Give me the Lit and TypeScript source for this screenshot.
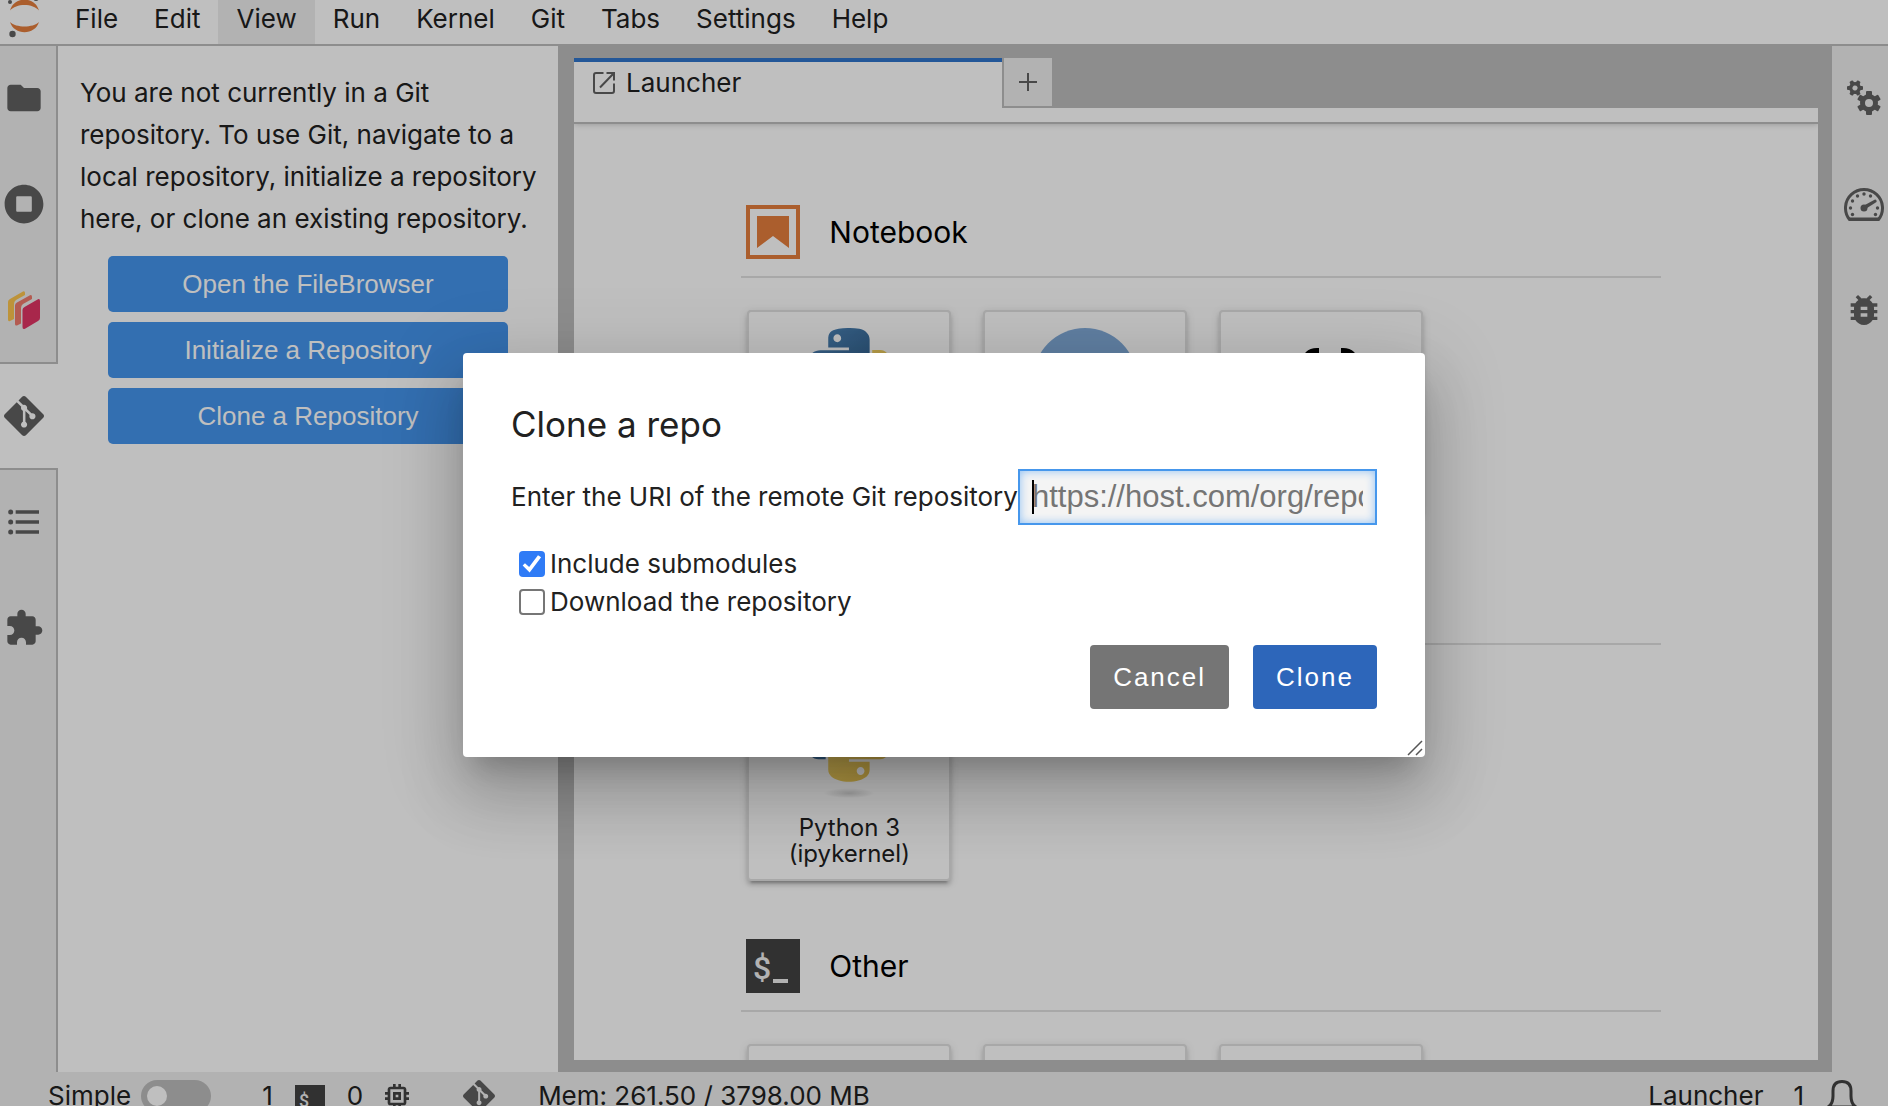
import { LitElement, html, svg, css, nothing } from "lit";
import type { SVGTemplateResult } from "lit";
import { customElement } from "lit/decorators.js";
import { classMap } from "lit/directives/class-map.js";

const GIT =
  "M23.546 10.93L13.067.452c-.604-.603-1.582-.603-2.188 0L8.708 2.627l2.76 2.76c.645-.215 1.379-.07 1.889.441.516.515.658 1.258.438 1.9l2.658 2.66c.645-.223 1.387-.078 1.9.435.721.72.721 1.884 0 2.604-.719.719-1.881.719-2.6 0-.539-.541-.674-1.337-.404-1.996L12.86 8.955v6.525c.176.086.342.203.488.348.713.721.713 1.883 0 2.6-.719.721-1.889.721-2.609 0-.719-.719-.719-1.879 0-2.598.182-.18.387-.316.605-.406V8.835c-.217-.091-.424-.222-.6-.401-.545-.545-.676-1.342-.396-2.009L7.636 3.7.45 10.881c-.6.605-.6 1.584 0 2.189l10.48 10.477c.604.604 1.582.604 2.186 0l10.43-10.43c.605-.603.605-1.582 0-2.187";

const gear = (cx: number, cy: number, body: number, tip: number, hole: number, tooth: number, turn: number) => svg`
  <g transform="translate(${cx} ${cy}) rotate(${turn})">
    <circle r=${(body + hole) / 2} fill="none" stroke="currentColor" stroke-width=${body - hole}></circle>
    ${[0, 60, 120, 180, 240, 300].map(
      (a) => svg`<rect x=${-tooth / 2} y=${-tip} width=${tooth} height=${tip - body + 2} rx="1" transform="rotate(${a})" fill="currentColor"></rect>`
    )}
  </g>`;

const icon = (box: string, body: SVGTemplateResult) =>
  html`<svg class="icon" viewBox=${box} fill="currentColor" aria-hidden="true">${body}</svg>`;

const gitIcon = () => icon("0 0 24 24", svg`<path d=${GIT}></path>`);

const LEFT_TABS = [
  {
    name: "File Browser",
    art: icon("0 0 24 24", svg`<path d="M10 4H4c-1.1 0-2 .9-2 2v12c0 1.1.9 2 2 2h16c1.1 0 2-.9 2-2V8c0-1.1-.9-2-2-2h-8l-2-2z"></path>`),
  },
  {
    name: "Running",
    art: icon(
      "0 0 512 512",
      svg`<path d="M256 8C119 8 8 119 8 256s111 248 248 248 248-111 248-248S393 8 256 8zm100 332c0 8.800-7.200 16-16 16H172c-8.800 0-16-7.200-16-16V172c0-8.800 7.200-16 16-16h168c8.800 0 16 7.200 16 16v168z"></path>`
    ),
  },
  {
    name: "Dask",
    art: icon(
      "0 0 40 40",
      svg`<path fill="#fcc54e" d="M4 12Q4 10 6 9L19 1.500Q21 .6 21 3V5L12 10Q10 11.500 10 14V29L6 31Q4 32 4 29.500Z"></path>
        <path fill="#ef7a6c" d="M11 15.500Q11 13.500 13 12.400L26 5.200Q28 4.400 28 7V9L19 14Q17 15.300 17 18V33.500L13 35.500Q11 36 11 34Z"></path>
        <path fill="#e03465" d="M18.500 20Q18.500 18 20.500 17L34 9.300Q36 8.500 36 11V28Q36 30 34 31L21 38.700Q18.500 40 18.500 37Z"></path>`
    ),
  },
  { name: "Git", art: gitIcon(), active: true },
  {
    name: "Table of Contents",
    art: icon(
      "0 0 24 24",
      svg`<path d="M7 5h14v2H7zM7 11h14v2H7zM7 17h14v2H7z"></path>
        <circle cx="4" cy="6" r="1.500"></circle><circle cx="4" cy="12" r="1.500"></circle><circle cx="4" cy="18" r="1.500"></circle>`
    ),
  },
  {
    name: "Extension Manager",
    art: icon(
      "0 0 24 24",
      svg`<path d="M20.500 11H19V7c0-1.100-.9-2-2-2h-4V3.500C13 2.120 11.880 1 10.500 1S8 2.120 8 3.500V5H4c-1.100 0-1.990.9-1.990 2v3.800H3.500c1.490 0 2.700 1.210 2.700 2.700s-1.210 2.700-2.700 2.700H2V20c0 1.100.9 2 2 2h3.800v-1.500c0-1.490 1.210-2.700 2.700-2.700 1.490 0 2.700 1.210 2.700 2.700V22H17c1.100 0 2-.9 2-2v-4h1.500c1.380 0 2.500-1.120 2.500-2.500S21.880 11 20.500 11z"></path>`
    ),
  },
];

const RIGHT_TABS = [
  { name: "Property Inspector", art: icon("0 0 40 40", svg`${gear(11, 10, 6, 8, 2.5, 4, 30)}${gear(25, 25, 9, 12, 4, 6, 0)}`) },
  {
    name: "Resource Usage",
    art: icon(
      "0 0 40 40",
      svg`<path d="M5.500 35.500A18.500 18.500 0 1 1 34.500 35.500Z" fill="none" stroke="currentColor" stroke-width="3" stroke-linejoin="round"></path>
        <path d="M5 33.500H35V37H5Z"></path>
        <circle cx="20" cy="24" r="3.500"></circle>
        <path d="M19 22L31 15.500Q33 15.500 32.500 18L21.500 25Z"></path>
        ${[[8.5, 30.5], [6.5, 24], [8.5, 17], [13.5, 12], [20, 10], [26.5, 12], [33.5, 24], [31.5, 30.5]].map(
          ([x, y]) => svg`<circle cx=${x} cy=${y} r="1.700"></circle>`
        )}`
    ),
  },
  {
    name: "Debugger",
    art: icon(
      "0 0 24 24",
      svg`<path d="M20 8h-2.810c-.45-.78-1.070-1.450-1.820-1.960L17 4.410 15.590 3l-2.170 2.170C12.960 5.060 12.490 5 12 5c-.49 0-.96.06-1.410.17L8.410 3 7 4.410l1.620 1.630C7.880 6.550 7.260 7.220 6.810 8H4v2h2.090c-.05.33-.09.66-.09 1v1H4v2h2v1c0 .34.04.67.09 1H4v2h2.810c1.040 1.790 2.970 3 5.190 3s4.150-1.210 5.190-3H20v-2h-2.090c.05-.33.09-.66.09-1v-1h2v-2h-2v-1c0-.34-.04-.67-.09-1H20V8zm-6 8h-4v-2h4v2zm0-4h-4v-2h4v2z"></path>`
    ),
  },
];

const pythonArt = () => html`<svg class="card-art" viewBox="2 2 124 124" aria-hidden="true">
  <defs>
    <linearGradient id="py-blue" x1="0" y1="0" x2="1" y2="1"><stop offset="0" stop-color="#5089bd"></stop><stop offset="1" stop-color="#2e5c88"></stop></linearGradient>
    <linearGradient id="py-gold" x1="0" y1="0" x2="1" y2="1"><stop offset="0" stop-color="#fbdd70"></stop><stop offset="1" stop-color="#e6bf4a"></stop></linearGradient>
    <radialGradient id="py-shade"><stop offset="0" stop-color="#000" stop-opacity=".16"></stop><stop offset="1" stop-color="#000" stop-opacity="0"></stop></radialGradient>
  </defs>
  <ellipse cx="64" cy="119" rx="30" ry="6" fill="url(#py-shade)"></ellipse>
  <path fill="url(#py-blue)" d="M63.391 1.988c-4.222.02-8.252.379-11.800 1.007-10.450 1.846-12.346 5.710-12.346 12.837v9.411h24.693v3.137H29.977c-7.176 0-13.460 4.313-15.426 12.521-2.268 9.405-2.368 15.275 0 25.096 1.755 7.311 5.947 12.519 13.124 12.519h8.491V67.234c0-8.151 7.051-15.340 15.426-15.340h24.665c6.866 0 12.346-5.654 12.346-12.548V15.833c0-6.693-5.646-11.720-12.346-12.837-4.244-.706-8.645-1.027-12.866-1.008zM50.037 9.557c2.550 0 4.634 2.117 4.634 4.721 0 2.593-2.083 4.690-4.634 4.690-2.560 0-4.633-2.097-4.633-4.690-.001-2.604 2.073-4.721 4.633-4.721z"></path>
  <path fill="url(#py-gold)" d="M91.682 28.380v10.966c0 8.500-7.208 15.655-15.426 15.655H51.591c-6.756 0-12.346 5.783-12.346 12.549v23.515c0 6.691 5.818 10.628 12.346 12.547 7.816 2.297 15.312 2.713 24.665 0 6.216-1.801 12.346-5.423 12.346-12.547v-9.412H63.938v-3.138h37.012c7.176 0 9.852-5.005 12.348-12.519 2.578-7.735 2.467-15.174 0-25.096-1.774-7.145-5.161-12.521-12.348-12.521h-9.268zM77.809 87.927c2.561 0 4.634 2.097 4.634 4.692 0 2.602-2.074 4.719-4.634 4.719-2.550 0-4.633-2.117-4.633-4.719 0-2.595 2.083-4.692 4.633-4.692z"></path>
</svg>`;

const discArt = () => html`<svg class="card-art" viewBox="0 0 104 104" aria-hidden="true"><circle cx="52" cy="52" r="52" fill="#80aad9"></circle></svg>`;

const bracesArt = () => html`<svg class="card-art" viewBox="0 0 104 104" aria-hidden="true">
  <g fill="none" stroke="#000" stroke-width="10" stroke-linejoin="round">
    <path d="M50 25H48Q38 25 38 35V44Q38 52 30 52Q38 52 38 60V69Q38 79 48 79H50"></path>
    <path d="M72 25H74Q84 25 84 35V44Q84 52 92 52Q84 52 84 60V69Q84 79 74 79H72"></path>
  </g>
</svg>`;

const notebookMark = () => html`<svg class="section-mark" viewBox="0 0 54 54" aria-hidden="true">
  <rect x="2" y="2" width="50" height="50" fill="none" stroke="#e57e3d" stroke-width="4"></rect>
  <path d="M11 11H43V43L27 31L11 43Z" fill="#e57e3d"></path>
</svg>`;

const terminalMark = (cls: string) => html`<svg class=${cls} viewBox="0 0 54 54" aria-hidden="true">
  <rect width="54" height="54" fill="#424242"></rect>
  <text class="prompt" x="7" y="40">$</text>
  <rect x="27" y="40" width="15" height="4" fill="#eee"></rect>
</svg>`;

@customElement("app-root")
export class AppRoot extends LitElement {
  static styles = css`
    :host {
      display: block;
      height: 100vh;
      overflow: hidden;
      position: relative;
      font: 26px/42px Inter, "Liberation Sans", sans-serif;
      color: #212121;
    }
    * { box-sizing: border-box; }
    button { font: inherit; color: inherit; border: 0; padding: 0; margin: 0; background: none; }
    h1, h2, p { margin: 0; padding: 0; font-weight: 400; }

    /* The status bar runs past the lower edge of the window. */
    .shell {
      display: grid;
      grid-template-rows: auto 1fr 48px;
      height: calc(100vh + 14px);
      background: #fff;
    }

    .menubar { display: flex; border-bottom: 2px solid #bdbdbd; background: #fff; }
    .logo { width: 57px; height: 44px; flex: none; }
    .menus { display: flex; }
    .menu { display: flex; align-items: flex-start; height: 44px; padding: 0 18px; line-height: 38px; }
    .menu.active { background: #eee; }

    .work { display: grid; grid-template-columns: 58px 500px 1fr 56px; min-height: 0; }

    .rail { display: flex; flex-direction: column; background: #eee; color: #616161; min-height: 0; }
    .rail::after { content: ""; flex: 1; }
    .rail-left::after { border-right: 2px solid #bdbdbd; }
    .rail-tab { display: flex; align-items: center; height: 106px; padding-bottom: 2px; }
    .rail-left .rail-tab { padding-left: 4px; border-right: 2px solid #bdbdbd; }
    .rail-left .rail-tab.active { padding-bottom: 0; background: #fff; border-right: 0; border-bottom: 2px solid #bdbdbd; }
    .rail-left .rail-tab.before { padding-bottom: 0; border-bottom: 2px solid #bdbdbd; }
    .rail-right .rail-tab { padding-left: 12px; }
    .icon { width: 40px; height: 40px; display: block; }

    .panel { padding-top: 26px; background: #fff; }
    .panel-text { padding: 0 12px 0 22px; }
    .panel-actions { display: flex; flex-direction: column; gap: 10px; padding: 16px 50px; }
    .action {
      height: 56px;
      border-radius: 5px;
      background: #4494ec;
      color: #fff;
      font: 26px "Liberation Sans", sans-serif;
    }

    .dock { display: flex; flex-direction: column; padding: 12px 14px 12px 16px; background: #bdbdbd; min-width: 0; min-height: 0; }
    .tabs { display: flex; height: 50px; }
    .tab {
      display: flex;
      align-items: center;
      gap: 10px;
      width: 428px;
      padding-left: 18px;
      background: #fff;
      box-shadow: inset 0 4px #2f74cb;
    }
    .tab-icon { width: 24px; height: 24px; color: #616161; }
    .add { width: 50px; border-left: 2px solid #bdbdbd; border-bottom: 2px solid #bdbdbd; background: #eee; color: #616161; display: grid; place-items: center; }
    .add-icon { width: 20px; height: 20px; display: block; }
    .toolbar {
      position: relative;
      flex: none;
      height: 16px;
      border-bottom: 2px solid #bdbdbd;
      background: #fff;
      box-shadow: 0 0 6px rgba(0, 0, 0, 0.24);
      clip-path: inset(0 0 -8px 0);
    }

    .launcher { flex: 1; min-height: 0; overflow: hidden; background: #fff; padding: 81px 0 0 10px; }
    .section { width: 74.5%; margin: 0 auto; padding-bottom: 58px; }
    .section-head { display: flex; align-items: center; gap: 29px; height: 73px; padding: 0 5px 17px; border-bottom: 2px solid #e0e0e0; }
    .section-mark { width: 54px; height: 54px; display: block; }
    .prompt { font: 500 32px Roboto, sans-serif; fill: #eee; }
    .section-title { font-size: 30px; line-height: 36px; color: #000; }
    .cards { display: flex; gap: 32px; padding: 32px 6px 0; }
    .card {
      display: flex;
      flex-direction: column;
      align-items: center;
      gap: 16px;
      width: 204px;
      height: 204px;
      padding: 16px 24px 0;
      border: 2px solid #e0e0e0;
      border-radius: 4px;
      background: #fff;
      box-shadow: 0 6px 2px -4px rgba(0, 0, 0, 0.2), 0 4px 4px rgba(0, 0, 0, 0.14), 0 2px 10px rgba(0, 0, 0, 0.12);
    }
    .card-art { width: 104px; height: 104px; flex: none; display: block; }
    .card-label { font-size: 24px; line-height: 26px; text-align: center; }

    .status { display: flex; justify-content: space-between; padding: 0 28px 0 48px; background: #eee; line-height: 48px; }
    .status-group { display: flex; align-items: center; }
    .status-item { display: flex; align-items: center; }
    .simple { gap: 10px; margin-right: 51px; }
    .switch { appearance: none; margin: 0; width: 70px; height: 32px; border-radius: 16px; background: #bdbdbd; padding: 6px; display: flex; }
    .switch::before { content: ""; width: 20px; height: 20px; border-radius: 50%; background: #fff; }
    .counts { gap: 22px; margin-right: 18px; }
    .chip { width: 32px; height: 32px; color: #424242; margin-right: 50px; }
    .status-term { width: 30px; height: 30px; display: block; margin-top: 8px; }
    .status-git { display: flex; color: #616161; margin-right: 43px; }
    .status-git .icon { width: 32px; height: 32px; }
    .status-right { gap: 30px; }
    .bell { width: 36px; height: 36px; color: #424242; margin-left: -10px; }

    .overlay {
      position: absolute;
      inset: 0;
      display: flex;
      align-items: center;
      justify-content: center;
      padding-top: 4px;
      background: rgba(0, 0, 0, 0.25);
    }
    .dialog {
      position: relative;
      width: 962px;
      max-width: 92vw;
      padding: 50px 48px 48px;
      border-radius: 4px;
      background: #fff;
      box-shadow: 0 20px 26px -12px rgba(0, 0, 0, 0.2), 0 40px 62px 6px rgba(0, 0, 0, 0.14), 0 16px 76px 14px rgba(0, 0, 0, 0.12);
    }
    .dialog-title { font-size: 35px; line-height: 42px; }
    .field { display: flex; align-items: center; margin: 24px 0 20px; }
    .field-label { flex: none; }
    .uri-wrap { position: relative; flex: 1; min-width: 0; display: flex; }
    .uri {
      width: 100%;
      height: 56px;
      padding: 0 12px;
      border: 2px solid #4697ec;
      border-radius: 0;
      outline: 0;
      background: #f4f4f4;
      box-shadow: inset 0 0 10px #8fc0f4;
      font: 31px "Liberation Sans", sans-serif;
      color: #212121;
      caret-color: transparent;
    }
    .uri::placeholder { color: #757575; opacity: 1; }
    .caret { position: absolute; left: 14px; top: 11px; width: 2px; height: 34px; background: #000; }
    .check { display: flex; align-items: center; gap: 5px; width: fit-content; padding-left: 8px; line-height: 38px; }
    .box { appearance: none; width: 26px; height: 26px; margin: 0; border: 2px solid #767676; border-radius: 4px; background: #fff; display: grid; }
    .box:checked { border: 0; background: #2f7bf6; }
    .box:checked::before { content: ""; background: #fff; clip-path: polygon(14% 56%, 23% 47%, 39% 62%, 73% 16%, 85% 24%, 41% 83%); }
    .dialog-actions { display: flex; justify-content: flex-end; gap: 24px; margin-top: 24px; }
    .btn { height: 64px; padding: 0 23px; border-radius: 4px; color: #fff; font: 26px "Liberation Sans", sans-serif; letter-spacing: 2px; }
    .cancel { background: #757575; }
    .accept { background: #2d66ba; }
    .grip { position: absolute; right: 2px; bottom: 1px; width: 16px; height: 16px; }
  `;

  firstUpdated() {
    this.renderRoot.querySelector<HTMLInputElement>(".uri")?.focus();
  }

  private menubar() {
    const names = ["File", "Edit", "View", "Run", "Kernel", "Git", "Tabs", "Settings", "Help"];
    return html`<header class="menubar">
      <svg class="logo" viewBox="0 0 57 44" aria-hidden="true">
        <g fill="#e57e3d">
          <path d="M10 10.500C16 3 33 3 39 10.500C35-4 14-4 10 10.500Z"></path>
          <path d="M10 22C16 28 33 28 39 22C35 35.500 14 35.500 10 22Z"></path>
        </g>
        <g fill="#616161"><circle cx="12.500" cy="34" r="3.200"></circle><circle cx="10" cy="2" r="2"></circle><circle cx="36" cy="-1.500" r="2.600"></circle></g>
      </svg>
      <nav class="menus">
        ${names.map((n) => html`<button class=${classMap({ menu: true, active: n === "View" })}>${n}</button>`)}
      </nav>
    </header>`;
  }

  private section(title: string, mark: unknown, cards: { art?: unknown; name: string; label?: string }[]) {
    return html`<section class="section">
      <div class="section-head">${mark}${title ? html`<h2 class="section-title">${title}</h2>` : nothing}</div>
      <div class="cards">
        ${cards.map(
          (c) => html`<button class="card" aria-label=${c.name}>
            ${c.art ?? nothing}${c.label ? html`<span class="card-label">${c.label}</span>` : nothing}
          </button>`
        )}
      </div>
    </section>`;
  }

  private dock() {
    return html`<main class="dock">
      <div class="tabs">
        <div class="tab">
          <svg class="tab-icon" viewBox="0 0 24 24" fill="none" stroke="currentColor" stroke-width="2" aria-hidden="true">
            <path d="M11.500 2H4Q2 2 2 4V20Q2 22 4 22H20Q22 22 22 20V12.500"></path>
            <path d="M14.500 2H22V9.500M22 2L8 16.500"></path>
          </svg>
          <span>Launcher</span>
        </div>
        <button class="add" aria-label="New Launcher">
          <svg class="add-icon" viewBox="0 0 20 20" stroke="currentColor" stroke-width="2" aria-hidden="true"><path d="M10 1V19M1 10H19"></path></svg>
        </button>
      </div>
      <div class="toolbar"></div>
      <div class="launcher">
        ${this.section("Notebook", notebookMark(), [
          { name: "Python 3 notebook", art: pythonArt() },
          { name: "Notebook", art: discArt() },
          { name: "Code notebook", art: bracesArt() },
        ])}
        ${this.section("", nothing, [{ name: "Python 3 (ipykernel)", art: pythonArt(), label: "Python 3 (ipykernel)" }])}
        ${this.section("Other", terminalMark("section-mark"), [{ name: "Terminal" }, { name: "Text File" }, { name: "Markdown File" }])}
      </div>
    </main>`;
  }

  private status() {
    return html`<footer class="status">
      <div class="status-group">
        <label class="status-item simple">Simple <input class="switch" type="checkbox" role="switch" /></label>
        <div class="status-item counts"><span>1</span>${terminalMark("status-term")}<span>0</span></div>
        <svg class="chip" viewBox="0 0 24 24" fill="currentColor" aria-hidden="true">
          <path d="M15 9H9v6h6V9zm-2 4h-2v-2h2v2zm8-2V9h-2V7c0-1.100-.9-2-2-2h-2V3h-2v2h-2V3H9v2H7c-1.100 0-2 .9-2 2v2H3v2h2v2H3v2h2v2c0 1.100.9 2 2 2h2v2h2v-2h2v2h2v-2h2c1.100 0 2-.9 2-2v-2h2v-2h-2v-2h2zm-4 6H7V7h10v10z"></path>
        </svg>
        <span class="status-git">${gitIcon()}</span>
        <span>Mem: 261.50 / 3798.00 MB</span>
      </div>
      <div class="status-group status-right">
        <span>Launcher</span>
        <span>1</span>
        <svg class="bell" viewBox="0 0 36 36" fill="none" stroke="currentColor" stroke-width="3" aria-hidden="true">
          <path d="M4 29Q9 26 9 18V13Q9 3.500 18 3.500Q27 3.500 27 13V18Q27 26 32 29Z"></path>
        </svg>
      </div>
    </footer>`;
  }

  private dialog() {
    return html`<div class="overlay">
      <form class="dialog" role="dialog" aria-labelledby="dialog-title" @submit=${(e: Event) => e.preventDefault()}>
        <h1 class="dialog-title" id="dialog-title">Clone a repo</h1>
        <div class="field">
          <label class="field-label" for="uri">Enter the URI of the remote Git repository</label>
          <div class="uri-wrap">
            <input class="uri" id="uri" type="text" placeholder="https://host.com/org/repo.git" />
            <span class="caret"></span>
          </div>
        </div>
        <label class="check"><input class="box" type="checkbox" checked />Include submodules</label>
        <label class="check"><input class="box" type="checkbox" />Download the repository</label>
        <div class="dialog-actions">
          <button class="btn cancel" type="button">Cancel</button>
          <button class="btn accept" type="submit">Clone</button>
        </div>
        <svg class="grip" viewBox="0 0 16 16" stroke="#555" stroke-width="1.500" aria-hidden="true"><path d="M1 15L15 1M9 15L15 9"></path></svg>
      </form>
    </div>`;
  }

  render() {
    return html`<div class="shell">
        ${this.menubar()}
        <div class="work">
          <nav class="rail rail-left">
            ${LEFT_TABS.map(
              (t, i) => html`<button
                class=${classMap({ "rail-tab": true, active: !!t.active, before: !!LEFT_TABS[i + 1]?.active })}
                aria-label=${t.name}
              >${t.art}</button>`
            )}
          </nav>
          <aside class="panel">
            <p class="panel-text">
              You are not currently in a Git repository. To use Git, navigate to a local repository, initialize a
              repository here, or clone an existing repository.
            </p>
            <div class="panel-actions">
              <button class="action">Open the FileBrowser</button>
              <button class="action">Initialize a Repository</button>
              <button class="action">Clone a Repository</button>
            </div>
          </aside>
          ${this.dock()}
          <nav class="rail rail-right">
            ${RIGHT_TABS.map((t) => html`<button class="rail-tab" aria-label=${t.name}>${t.art}</button>`)}
          </nav>
        </div>
        ${this.status()}
      </div>
      ${this.dialog()}`;
  }
}
